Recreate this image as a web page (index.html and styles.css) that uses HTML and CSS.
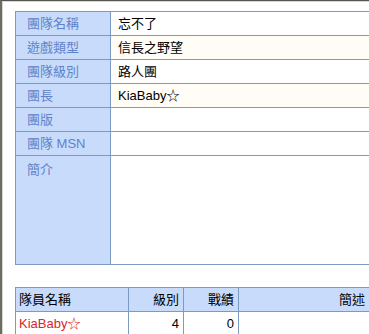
FILE: index.html
```html
<!DOCTYPE html>
<html>
<head>
<meta charset="utf-8">
<link rel="stylesheet" href="styles.css">
</head>
<body>
<div class="frame">
  <table class="info">
    <colgroup><col class="c-label"><col></colgroup>
    <tr><th>團隊名稱</th><td>忘不了</td></tr>
    <tr class="alt"><th>遊戲類型</th><td>信長之野望</td></tr>
    <tr><th>團隊級別</th><td>路人團</td></tr>
    <tr class="alt"><th>團長</th><td>KiaBaby☆</td></tr>
    <tr><th>團版</th><td></td></tr>
    <tr><th>團隊 MSN</th><td></td></tr>
    <tr class="intro"><th>簡介</th><td></td></tr>
  </table>
  <table class="members">
    <colgroup><col class="c-name"><col class="c-num"><col class="c-num"><col></colgroup>
    <tr><th class="name">隊員名稱</th><th class="num">級別</th><th class="num">戰績</th><th class="desc">簡述</th></tr>
    <tr><td class="name red">KiaBaby☆</td><td class="num">4</td><td class="num">0</td><td></td></tr>
  </table>
</div>
</body>
</html>
```
FILE: styles.css
```css
html, body {
  margin: 0;
  padding: 0;
  background: #ffffff;
  overflow: hidden;
}
body {
  font-family: "Liberation Sans", "Noto Sans CJK TC", sans-serif;
  font-size: 13px;
  color: #000;
}
.frame {
  border-top: 1px solid #55554f;
  border-left: 2px solid #6c6c64;
  box-shadow: inset 1px 1px 0 #d8d8d0;
  padding: 10px 0 0 13px;
  width: 500px;
  height: 400px;
}
table {
  border-collapse: collapse;
  table-layout: fixed;
}
.info {
  width: 420px;
}
.c-label {
  width: 95px;
}
.info th, .info td {
  border: 1px solid #7b9cc0;
  height: 23px;
  padding: 0 0 0 7px;
  vertical-align: middle;
  text-align: left;
  font-weight: normal;
  line-height: 15px;
}
.info th {
  padding-left: 11px;
  background: #c8dbfb;
  color: #5f83c9;
}
.info td {
  background: #ffffff;
}
.info tr.alt td {
  background: #fffdf6;
}
.info tr.intro th, .info tr.intro td {
  height: 102px;
  vertical-align: top;
  padding-top: 6px;
}
.members {
  margin-top: 22px;
  width: 357px;
}
.c-name {
  width: 113px;
}
.c-num {
  width: 55px;
}
.members th, .members td {
  border: 1px solid #7b9cc0;
  height: 23px;
  padding: 0 4px 0 3px;
  font-weight: normal;
  vertical-align: middle;
  line-height: 15px;
}
.members th {
  background: #c8dbfb;
  color: #000;
}
.members .name {
  text-align: left;
}
.members .num {
  text-align: right;
}
.members .desc {
  text-align: right;
  padding-right: 6px;
}
.members td.red {
  color: #d8262a;
}
```
